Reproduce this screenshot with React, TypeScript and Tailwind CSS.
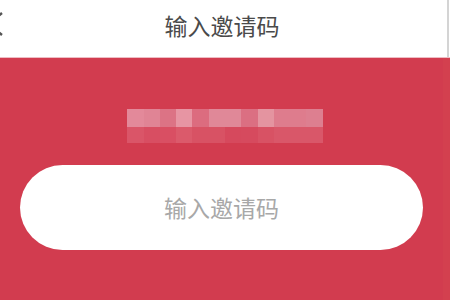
const topRow = [
  "#e3899a", "#e08495", "#dc7385", "#e795a3", "#dc6c7f", "#e08898",
  "#e08898", "#db6f82", "#e494a0", "#de7c8d", "#de7c8d", "#dd7f90",
];
const bottomRow = [
  "#da5568", "#d84e62", "#d94f63", "#db5a6b", "#d85264", "#d85264",
  "#d6495d", "#d64a5e", "#d85264", "#d95769", "#d95769", "#d95769",
];

const App = () => {
  return (
    <div
      className="w-[450px] h-[300px] overflow-hidden flex flex-col bg-[#d23c4f]"
      style={{ fontFamily: '"Noto Sans CJK SC", "Noto Sans", sans-serif' }}
    >
      {/* Header */}
      <div className="h-[58px] shrink-0 flex bg-white border-b border-[#eebdc4]">
        <div className="flex-1 flex items-start relative">
          <svg width="3" height="24" viewBox="0 12 3 24" className="mt-[12px] shrink-0">
            <polyline points="2,13 -12,24 2,35" fill="none" stroke="#555" strokeWidth="2.5" />
          </svg>
          <div className="flex-1 text-center text-[23px] leading-[50px] text-[#4a4a4a] pr-[6px]">
            输入邀请码
          </div>
        </div>
        <div className="w-[2px] bg-[#d4d4d4]" />
        <div className="w-[1px] bg-white" />
      </div>

      {/* Body */}
      <div className="flex-1 flex">
        <div className="w-[443px] flex flex-col items-center pt-[51px]">
          {/* blurred code */}
          <div className="flex flex-col blur-[0.6px] ml-[7px]">
            <div className="flex">
              {topRow.map((c, i) => (
                <div key={i} className="w-[16.3px] h-[18px]" style={{ backgroundColor: c }} />
              ))}
            </div>
            <div className="flex">
              {bottomRow.map((c, i) => (
                <div key={i} className="w-[16.3px] h-[16px]" style={{ backgroundColor: c }} />
              ))}
            </div>
          </div>

          {/* input */}
          <div className="mt-[22px] w-[403px] h-[85px] rounded-full bg-white flex items-center justify-center">
            <input
              className="w-full text-center bg-transparent outline-none text-[23px] text-[#a8a8a8] placeholder:text-[#a8a8a8]"
              placeholder="输入邀请码"
            />
          </div>
        </div>
        <div className="flex-1 bg-[#d3404f]" />
      </div>
    </div>
  );
};

export default App;
